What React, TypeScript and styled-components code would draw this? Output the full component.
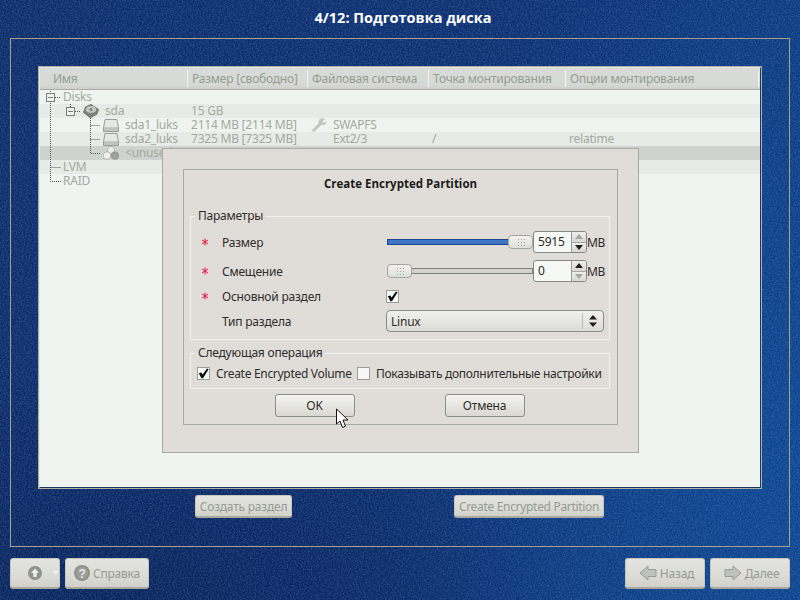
import styled, { createGlobalStyle } from 'styled-components';

const GlobalStyle = createGlobalStyle`
  html, body {
    margin: 0;
    padding: 0;
    overflow: hidden;
    background: #0e3274;
  }
`;

const FONT = `'Noto Sans', 'Open Sans', sans-serif`;

const Root = styled.div`
  position: relative;
  width: 800px;
  height: 600px;
  overflow: hidden;
  font-family: ${FONT};
  font-size: 12px;
  letter-spacing: -0.22px;
  display: flex;
  flex-direction: column;
  background:
    radial-gradient(ellipse 400px 560px at 800px 470px, #0c4690 0%, rgba(12, 70, 144, 0) 100%),
    radial-gradient(ellipse 460px 240px at 120px 600px, #07235a 0%, rgba(7, 35, 90, 0) 100%),
    linear-gradient(100deg, #0c2c69 0%, #0b2f71 55%, #0b3a80 100%);
`;

const Noise = styled.svg`
  position: absolute;
  inset: 0;
  opacity: 0.3;
  pointer-events: none;
`;

const Title = styled.div`
  position: relative;
  box-sizing: border-box;
  height: 38px;
  padding: 0 0 3px 6px;
  display: flex;
  align-items: center;
  justify-content: center;
  color: #fff;
  font-family: 'Open Sans', sans-serif;
  font-weight: 700;
  font-size: 14.5px;
  letter-spacing: 0;
`;

const Frame = styled.div`
  position: relative;
  box-sizing: border-box;
  margin: 0 10px;
  height: 509px;
  padding: 27px 27px 0;
  border: 1px solid #a89f90;
`;

const Panel = styled.div`
  box-sizing: border-box;
  height: 423px;
  border: 1px solid #b0afa3;
`;

const PanelInner = styled.div`
  box-sizing: border-box;
  height: 100%;
  background: #f0f4f0;
  border: 1px solid;
  border-color: #e6e6e2 #1b3766 #1b3766 #e6e6e2;
`;

const COLUMNS = '147px 120px 121px 137px 194px';

const Header = styled.div`
  display: grid;
  grid-template-columns: ${COLUMNS};
  height: 21px;
  background: linear-gradient(#d8dbd7 0%, #d6d9d5 80%, #d0cfcb 100%);
  border-bottom: 1px solid #a9aca8;
  color: #969c94;
`;

const HeaderCell = styled.div<{ $first?: boolean; $last?: boolean }>`
  display: flex;
  align-items: center;
  padding-left: ${(p) => (p.$first ? '13px' : '4px')};
  margin: 2px 0 2px;
  border-left: ${(p) => (p.$first ? 'none' : '1px solid #f2f4f1')};
  border-right: ${(p) => (p.$last ? '1px solid #f2f4f1' : 'none')};
  white-space: nowrap;
`;

const Tree = styled.div`
  position: relative;
`;

const TreeLines = styled.svg`
  position: absolute;
  left: 0;
  top: 0;
`;

const Row = styled.div<{ $tone: 'even' | 'odd' | 'selected' }>`
  display: grid;
  grid-template-columns: ${COLUMNS};
  height: 14px;
  line-height: 14px;
  color: #a3a9a0;
  background: ${(p) =>
    p.$tone === 'selected' ? '#cfd3cf' : p.$tone === 'odd' ? '#e7ebe7' : '#f0f4f0'};
`;

const NameCell = styled.div<{ $indent: number }>`
  display: flex;
  align-items: center;
  gap: 6px;
  padding-left: ${(p) => p.$indent}px;
  white-space: nowrap;
`;

const Cell = styled.div`
  padding-left: 4px;
  white-space: nowrap;
`;

const FsCell = styled.div`
  display: flex;
  align-items: center;
  gap: 6px;
  padding-left: 4px;
`;

const IconSlot = styled.span`
  display: inline-flex;
  width: 16px;
  height: 14px;
  align-items: center;
  justify-content: center;
`;

const ActionRow = styled.div`
  display: flex;
  margin-top: 6px;
  padding-left: 157px;
  gap: 162px;
`;

const DisabledButton = styled.div<{ $width: number; $height?: number }>`
  box-sizing: border-box;
  width: ${(p) => p.$width}px;
  height: ${(p) => p.$height ?? 23}px;
  display: flex;
  align-items: center;
  justify-content: center;
  gap: 3px;
  color: #959b92;
  white-space: nowrap;
  border-radius: 3px;
  border: 1px solid #c6c5bc;
  border-bottom: 2px solid #a9a89e;
  background: linear-gradient(#e3e4df 0%, #dcdcd7 60%, #d1d0c9 100%);
`;

const UpMenuButton = styled(DisabledButton)`
  justify-content: flex-start;
  gap: 10px;
  padding-left: 17px;
`;

const NavButton = styled(DisabledButton)`
  padding-left: 3px;
`;

const LatinText = styled.span`
  letter-spacing: -0.32px;
`;

const Footer = styled.div`
  position: relative;
  display: flex;
  margin-top: 11px;
  padding: 0 10px;
  gap: 5px;
`;

const Spacer = styled.div`
  flex: 1;
`;

const Modal = styled.div`
  position: absolute;
  left: 162px;
  top: 148px;
  box-sizing: border-box;
  width: 477px;
  height: 305px;
  padding: 20px;
  background: #e0dcd8;
  border: 1px solid #a6a9a4;
  color: #2e2e2c;
`;

const ModalInner = styled.div`
  box-sizing: border-box;
  height: 256px;
  padding: 0 6px;
  border: 1px solid #a5a8a3;
`;

const ModalTitle = styled.div`
  height: 33px;
  padding-top: 6px;
  text-align: center;
  font-family: 'Open Sans', sans-serif;
  font-weight: 700;
  font-size: 11.5px;
  letter-spacing: 0;
  line-height: 16px;
  color: #1c1c1b;
`;

const Group = styled.fieldset<{ $height: number; $gap?: number }>`
  box-sizing: border-box;
  height: ${(p) => p.$height}px;
  width: 420px;
  margin: ${(p) => p.$gap ?? 0}px 0 0;
  padding: 0 0 0 10px;
  border: 1px solid #f3f3ee;
  min-width: 0;
`;

const Legend = styled.legend`
  margin-left: -6px;
  padding: 0 3px;
  font-size: 12px;
  line-height: 14px;
`;

const ParamGrid = styled.div`
  display: grid;
  grid-template-columns: 21px 164px 218px;
  grid-template-rows: 29px 25px 25px 22px;
  margin-top: 8px;
`;

const GridCell = styled.div`
  display: flex;
  align-items: center;
  height: 22px;
`;

const SliderRow = styled.div`
  display: flex;
  align-items: center;
  height: 22px;
`;

const Track = styled.div`
  position: relative;
  flex: none;
  box-sizing: border-box;
  width: 146px;
  height: 6px;
  margin-left: 1px;
  border: 1px solid #7d807a;
  background: #d5d2ce;
`;

const TrackFill = styled.div`
  position: absolute;
  left: -1px;
  top: -1px;
  bottom: -1px;
  box-sizing: border-box;
  border: 1px solid #1d4690;
  background: #3f76c8;
`;

const Handle = styled.div`
  position: absolute;
  top: -5px;
  box-sizing: border-box;
  width: 25px;
  height: 14px;
  border: 1px solid #a4a6a1;
  border-radius: 4px;
  background: linear-gradient(#f2f2ef, #dededa);

  &::after {
    content: '';
    position: absolute;
    left: 8px;
    top: 2px;
    width: 9px;
    height: 8px;
    background-image: radial-gradient(#a2a39e 0.6px, transparent 0.7px);
    background-size: 3px 3px;
  }
`;

const Spin = styled.div`
  flex: none;
  box-sizing: border-box;
  display: flex;
  width: 54px;
  height: 22px;
  border: 1px solid #858782;
  border-radius: 3px;
  background: #f5f8f4;
  overflow: hidden;
`;

const SpinValue = styled.div`
  flex: 1;
  padding-left: 4px;
  line-height: 19px;
  color: #2a2a28;
`;

const SpinButtons = styled.div`
  width: 14px;
  display: flex;
  flex-direction: column;
  border-left: 1px solid #9a9c97;
`;

const SpinButton = styled.div`
  flex: 1;
  display: flex;
  align-items: center;
  justify-content: center;
  background: linear-gradient(#eeeeea, #d9d8d4);

  & + & {
    border-top: 1px solid #a4a6a1;
  }
`;

const Unit = styled.div`
  letter-spacing: -0.4px;
  color: #2e2e2c;
`;

const CheckBox = styled.div`
  box-sizing: border-box;
  flex: none;
  width: 13px;
  height: 13px;
  display: flex;
  align-items: center;
  justify-content: center;
  border: 1px solid #9c9e99;
  background: #f5f8f4;
`;

const Combo = styled.div`
  box-sizing: border-box;
  display: flex;
  align-items: center;
  width: 218px;
  height: 22px;
  padding-left: 4px;
  border: 1px solid #8b8d88;
  border-radius: 4px;
  background: linear-gradient(#f0f1ed, #dcdbd7);
`;

const ComboText = styled.div`
  flex: 1;
`;

const ComboArrow = styled.div`
  display: flex;
  align-items: center;
  justify-content: center;
  width: 20px;
  height: 16px;
  border-left: 1px solid #bdbeb9;
`;

const OptionsRow = styled.div`
  display: flex;
  align-items: center;
  height: 13px;
  margin-top: 7px;
  margin-left: -4px;
  white-space: nowrap;
`;

const OptionLabel = styled.span<{ $width: number }>`
  display: inline-block;
  width: ${(p) => p.$width}px;
  margin-left: 6px;
  letter-spacing: -0.3px;
`;

const ModalButtons = styled.div`
  display: flex;
  justify-content: center;
  gap: 90px;
  margin-top: 5px;
  padding-right: 2px;
`;

const ModalButton = styled.div`
  box-sizing: border-box;
  width: 80px;
  height: 23px;
  display: flex;
  align-items: center;
  justify-content: center;
  border: 1px solid #8b8d88;
  border-radius: 3px;
  background: linear-gradient(#f3f4f0, #d9d8d3);
  color: #2e2e2c;
`;

const Pointer = styled.svg`
  position: absolute;
  left: 335px;
  top: 408px;
`;

function Star() {
  return (
    <svg width="8" height="8" viewBox="0 0 8 8">
      <g stroke="#e8123f" strokeWidth="1" fill="none">
        <path d="M4 0.5V7.5" />
        <path d="M1 2L7 6" />
        <path d="M7 2L1 6" />
      </g>
    </svg>
  );
}

function Check() {
  return (
    <svg width="11" height="11" viewBox="0 0 11 11">
      <path d="M0.8 5.2L3.4 4.4L4.6 6.4L9 0.6L10.6 1.2L5 10.2L3.4 10.2Z" fill="#0c0c0c" />
    </svg>
  );
}

function DiskIcon() {
  return (
    <svg width="16" height="13" viewBox="0 0 16 13">
      <path d="M2 0.5H14L15.5 9V12.5H0.5V9Z" fill="#e6e8e4" stroke="#9a9d98" />
      <rect x="1" y="9.5" width="14" height="2.5" fill="#c2c5c0" />
      <path d="M1 9H15" stroke="#a9aca7" />
    </svg>
  );
}

function DriveIcon() {
  return (
    <svg width="16" height="14" viewBox="0 0 16 14">
      <path d="M8 0.5L15.5 5.5L14 10L7.5 13.8L0.5 8.5L2.5 3Z" fill="#7f827d" stroke="#6f726d" />
      <ellipse cx="8" cy="5.5" rx="5.2" ry="3.6" fill="#c6c8c4" />
      <circle cx="8" cy="5.5" r="1.5" fill="#7f827d" />
    </svg>
  );
}

function SpheresIcon() {
  return (
    <svg width="16" height="14" viewBox="0 0 16 14">
      <circle cx="8" cy="4" r="3.6" fill="#eceee9" stroke="#a2a5a0" strokeWidth="0.7" />
      <circle cx="4" cy="9.6" r="3.8" fill="#f1f2ee" stroke="#a2a5a0" strokeWidth="0.7" />
      <circle cx="12" cy="9.6" r="3.8" fill="#9ea19c" stroke="#8d908b" strokeWidth="0.7" />
    </svg>
  );
}

function WrenchIcon() {
  return (
    <svg width="16" height="14" viewBox="0 0 16 14">
      <path
        d="M10 0.5C12 0 13.5 0.5 14 1L11.5 3.2L12.8 5L15.5 3C16 5 14.5 7 12 7L10.5 6.8L4 13C3 14 1 13.5 0.5 12.5L7.5 5.5C7.3 3 8 1.2 10 0.5Z"
        fill="#c3c5c0"
      />
    </svg>
  );
}

function UpIcon() {
  return (
    <svg width="14" height="14" viewBox="0 0 14 14">
      <circle cx="7" cy="7" r="7" fill="#8f918c" />
      <path d="M7 2.5L11 7H8.7V11H5.3V7H3Z" fill="#eceee9" />
    </svg>
  );
}

function HelpIcon() {
  return (
    <svg width="16" height="16" viewBox="0 0 16 16">
      <circle cx="8" cy="8" r="8" fill="#8f918c" />
      <circle cx="8" cy="8" r="6" fill="#9c9e99" />
      <text x="8" y="12.5" textAnchor="middle" fontSize="12" fontWeight="700" fill="#e6e8e3" fontFamily="'Liberation Sans', sans-serif">
        ?
      </text>
    </svg>
  );
}

function NavArrow({ flip }: { flip?: boolean }) {
  return (
    <svg width="18" height="16" viewBox="0 0 18 16" style={flip ? { transform: 'scaleX(-1)' } : undefined}>
      <path d="M9 1V4.5H17V11.5H9V15L1 8Z" fill="#bfc1bc" stroke="#9a9c97" />
    </svg>
  );
}

function Caret() {
  return (
    <svg width="7" height="4" viewBox="0 0 7 4">
      <path d="M0 0H7L3.5 4Z" fill="#eeeeea" />
    </svg>
  );
}

function SpinArrow({ down, active }: { down?: boolean; active?: boolean }) {
  return (
    <svg width="8" height="5" viewBox="0 0 8 5">
      <path d={down ? 'M0 0H8L4 5Z' : 'M0 5H8L4 0Z'} fill={active ? '#1f1f1e' : '#a5a6a1'} />
    </svg>
  );
}

const ROWS = [
  { tone: 'even', indent: 23, name: 'Disks' },
  { tone: 'odd', indent: 43, name: 'sda', icon: <DriveIcon />, size: '15 GB' },
  {
    tone: 'even',
    indent: 63,
    name: 'sda1_luks',
    icon: <DiskIcon />,
    size: '2114 MB [2114 MB]',
    fsIcon: <WrenchIcon />,
    fs: 'SWAPFS',
  },
  {
    tone: 'odd',
    indent: 63,
    name: 'sda2_luks',
    icon: <DiskIcon />,
    size: '7325 MB [7325 MB]',
    fs: 'Ext2/3',
    mount: '/',
    options: 'relatime',
  },
  { tone: 'selected', indent: 63, name: '<unused>', icon: <SpheresIcon /> },
  { tone: 'odd', indent: 23, name: 'LVM' },
  { tone: 'even', indent: 23, name: 'RAID' },
] as const;

function Expander({ x, y }: { x: number; y: number }) {
  return (
    <g>
      <rect x={x + 0.5} y={y + 0.5} width="8" height="8" fill="#f0f4f0" stroke="#7c7e79" />
      <path d={`M${x + 2} ${y + 4.5}H${x + 7}`} stroke="#7c7e79" />
    </g>
  );
}

export default function App() {
  return (
    <Root>
      <GlobalStyle />
      <Noise width="800" height="600">
        <filter id="grain">
          <feTurbulence type="fractalNoise" baseFrequency="0.62" numOctaves="2" seed="4" />
          <feColorMatrix values="0 0 0 0 0.3  0 0 0 0 0.45  0 0 0 0 0.8  1.6 0 0 0 -0.55" />
        </filter>
        <rect width="800" height="600" filter="url(#grain)" />
      </Noise>

      <Title>4/12: Подготовка диска</Title>

      <Frame>
        <Panel>
          <PanelInner>
            <Header>
              <HeaderCell $first>Имя</HeaderCell>
              <HeaderCell>Размер [свободно]</HeaderCell>
              <HeaderCell>Файловая система</HeaderCell>
              <HeaderCell>Точка монтирования</HeaderCell>
              <HeaderCell $last>Опции монтирования</HeaderCell>
            </Header>
            <Tree>
              {ROWS.map((row) => (
                <Row key={row.name} $tone={row.tone}>
                  <NameCell $indent={row.indent}>
                    {'icon' in row && <IconSlot>{row.icon}</IconSlot>}
                    {row.name}
                  </NameCell>
                  <Cell>{'size' in row ? row.size : ''}</Cell>
                  <FsCell>
                    {'fs' in row && <IconSlot>{'fsIcon' in row ? row.fsIcon : null}</IconSlot>}
                    {'fs' in row ? row.fs : ''}
                  </FsCell>
                  <Cell>{'mount' in row ? row.mount : ''}</Cell>
                  <Cell>{'options' in row ? row.options : ''}</Cell>
                </Row>
              ))}
              <TreeLines width="110" height="98">
                <g stroke="#55574f" strokeDasharray="1 1" fill="none">
                  <path d="M10.5 1V91.5H21" />
                  <path d="M10.5 77.5H21" />
                  <path d="M15 7.5H21" />
                  <path d="M30.5 14V21" />
                  <path d="M35 21.5H41" />
                  <path d="M50.5 28V63.5H60" />
                  <path d="M50.5 35.5H60" />
                  <path d="M50.5 49.5H60" />
                </g>
                <Expander x={6} y={3} />
                <Expander x={26} y={17} />
              </TreeLines>
            </Tree>
          </PanelInner>
        </Panel>
        <ActionRow>
          <DisabledButton $width={97}>Создать раздел</DisabledButton>
          <DisabledButton $width={150}>
            <LatinText>Create Encrypted Partition</LatinText>
          </DisabledButton>
        </ActionRow>
      </Frame>

      <Footer>
        <UpMenuButton $width={50} $height={31}>
          <UpIcon />
          <Caret />
        </UpMenuButton>
        <DisabledButton $width={84} $height={31}>
          <HelpIcon />
          Справка
        </DisabledButton>
        <Spacer />
        <NavButton $width={80} $height={31}>
          <NavArrow />
          Назад
        </NavButton>
        <NavButton $width={80} $height={31}>
          <NavArrow flip />
          Далее
        </NavButton>
      </Footer>

      <Modal>
        <ModalInner>
          <ModalTitle>Create Encrypted Partition</ModalTitle>
          <Group $height={131}>
            <Legend>Параметры</Legend>
            <ParamGrid>
              <GridCell><Star /></GridCell>
              <GridCell>Размер</GridCell>
              <SliderRow>
                <Track>
                  <TrackFill style={{ width: 122 }} />
                  <Handle style={{ left: 120 }} />
                </Track>
                <Spin>
                  <SpinValue>5915</SpinValue>
                  <SpinButtons>
                    <SpinButton><SpinArrow /></SpinButton>
                    <SpinButton><SpinArrow down active /></SpinButton>
                  </SpinButtons>
                </Spin>
                <Unit>MB</Unit>
              </SliderRow>

              <GridCell><Star /></GridCell>
              <GridCell>Смещение</GridCell>
              <SliderRow>
                <Track>
                  <Handle style={{ left: -1 }} />
                </Track>
                <Spin>
                  <SpinValue>0</SpinValue>
                  <SpinButtons>
                    <SpinButton><SpinArrow active /></SpinButton>
                    <SpinButton><SpinArrow down /></SpinButton>
                  </SpinButtons>
                </Spin>
                <Unit>MB</Unit>
              </SliderRow>

              <GridCell><Star /></GridCell>
              <GridCell>Основной раздел</GridCell>
              <GridCell>
                <CheckBox><Check /></CheckBox>
              </GridCell>

              <GridCell />
              <GridCell>Тип раздела</GridCell>
              <GridCell>
                <Combo>
                  <ComboText>Linux</ComboText>
                  <ComboArrow>
                    <svg width="8" height="12" viewBox="0 0 8 12">
                      <path d="M4 0L8 4.5H0Z M4 12L0 7.5H8Z" fill="#1f1f1e" />
                    </svg>
                  </ComboArrow>
                </Combo>
              </GridCell>
            </ParamGrid>
          </Group>
          <Group $height={43} $gap={6}>
            <Legend>Следующая операция</Legend>
            <OptionsRow>
              <CheckBox><Check /></CheckBox>
              <OptionLabel $width={141}>Create Encrypted Volume</OptionLabel>
              <CheckBox />
              <OptionLabel $width={228}>Показывать дополнительные настройки</OptionLabel>
            </OptionsRow>
          </Group>
          <ModalButtons>
            <ModalButton>OK</ModalButton>
            <ModalButton>Отмена</ModalButton>
          </ModalButtons>
        </ModalInner>
      </Modal>

      <Pointer width="15" height="21" viewBox="0 0 15 21">
        <path d="M1.5 1V16L5 13L7.5 19.5L10.5 18.2L8 12H13Z" fill="#fff" stroke="#111" strokeWidth="1" />
      </Pointer>
    </Root>
  );
}
